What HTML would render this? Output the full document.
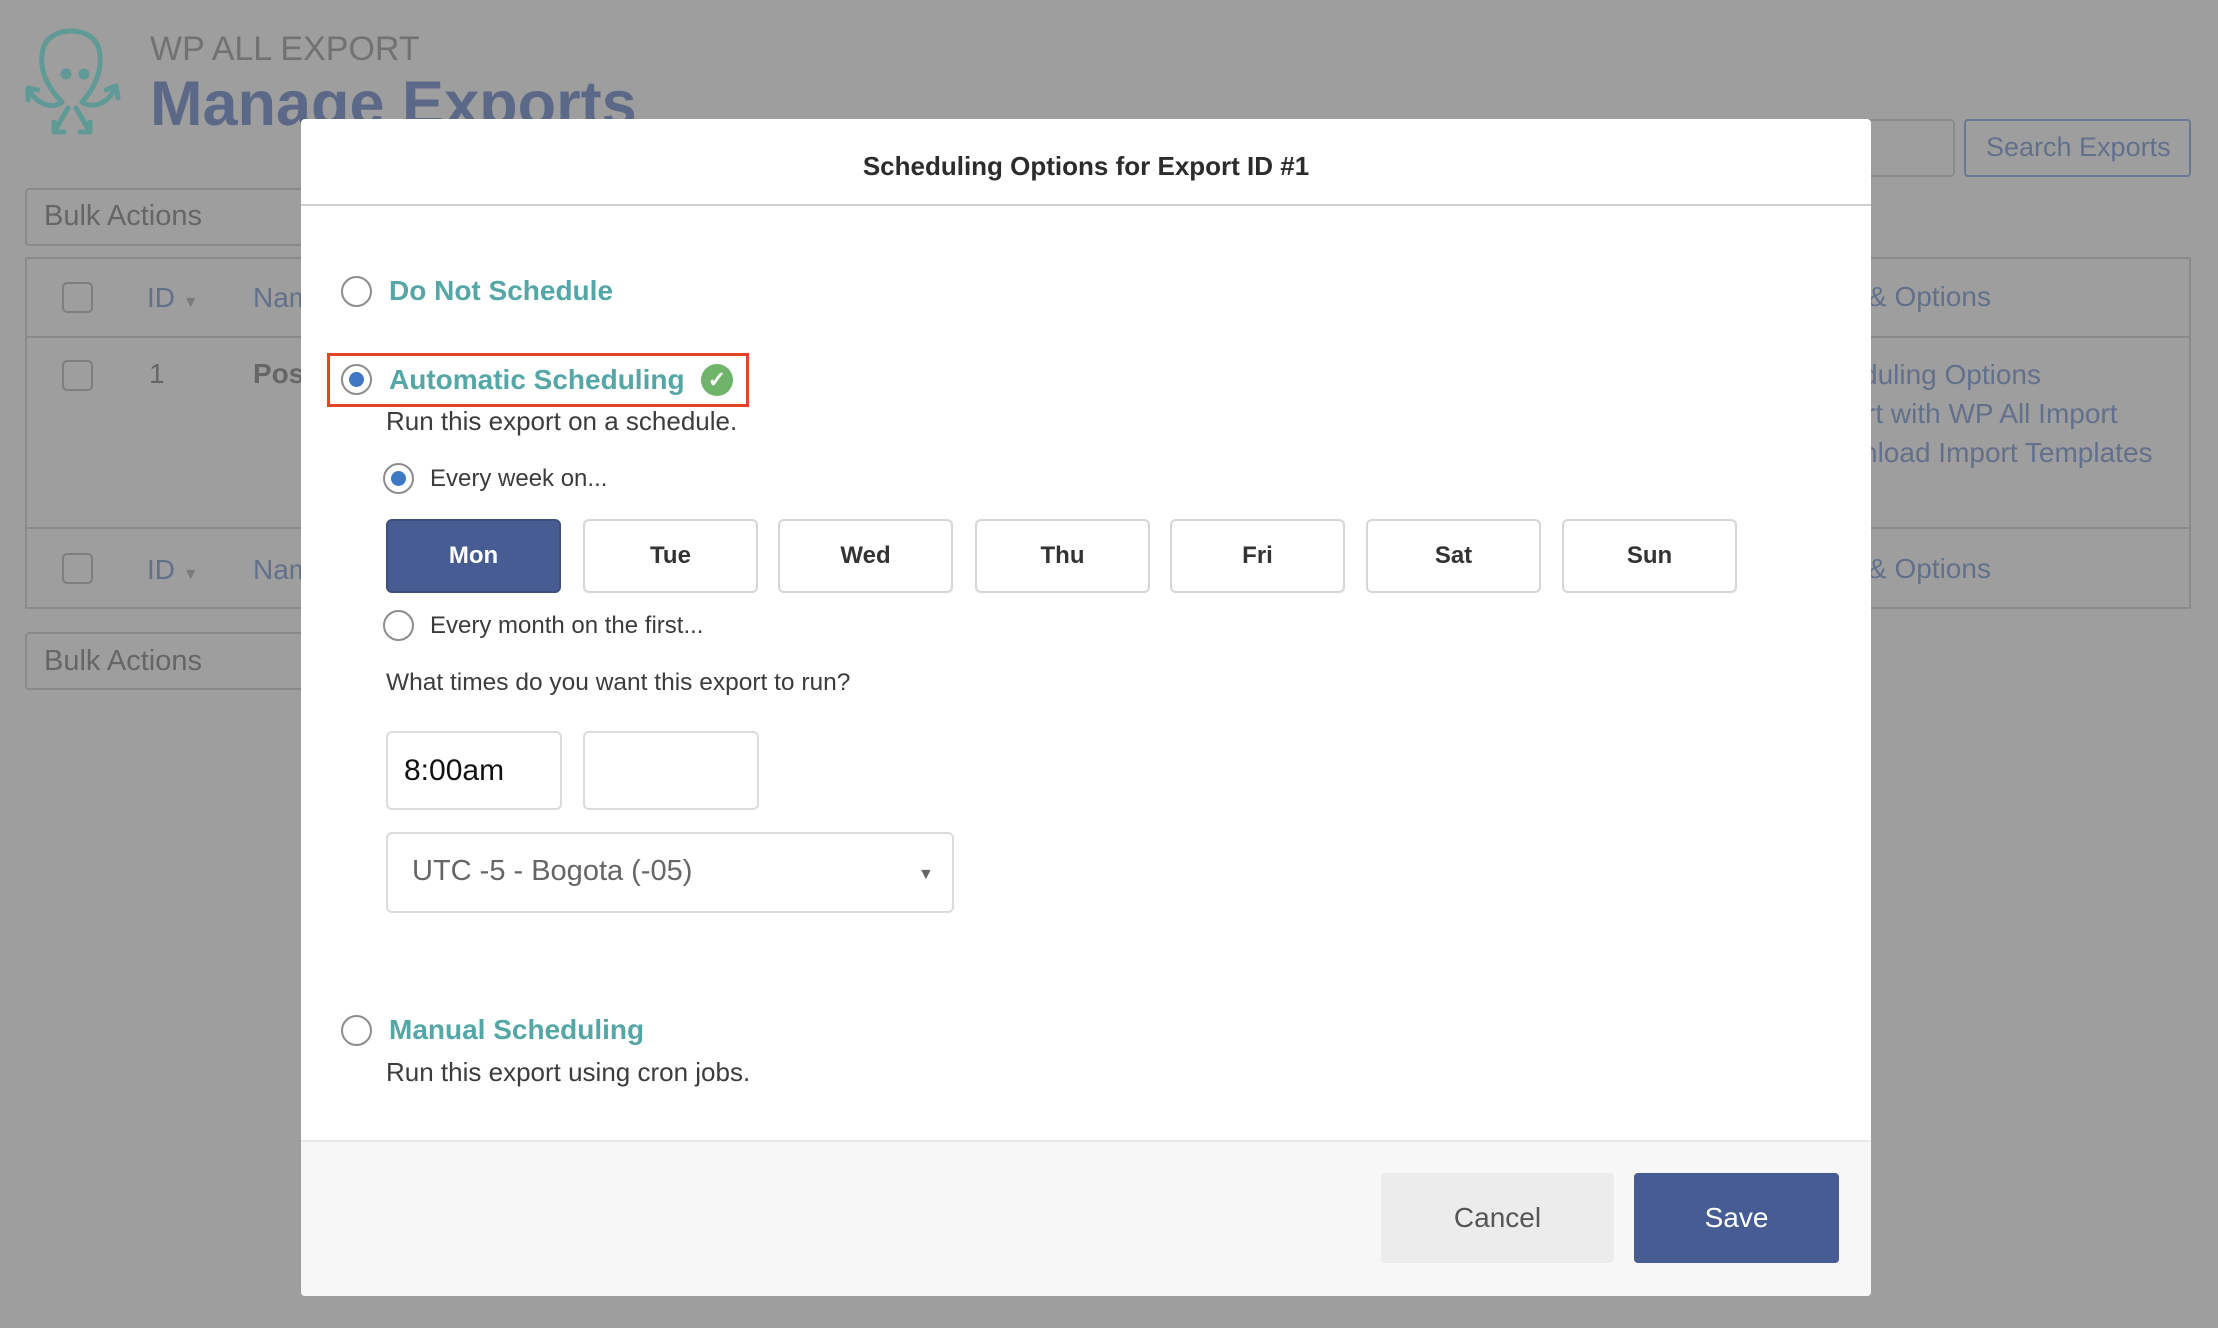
<!DOCTYPE html>
<html><head><meta charset="utf-8"><style>
*{box-sizing:border-box;margin:0;padding:0}
body{width:2218px;height:1328px;background:#9e9e9e;font-family:"Liberation Sans",Arial,sans-serif;position:relative;overflow:hidden}
.a{position:absolute;white-space:nowrap}
.bgbox{position:absolute;border:2px solid #8a8a8a;border-radius:4px}
.bgt{color:#666;font-size:29px}
.lnk{color:#63708c;font-size:28px}
.cb{position:absolute;width:31px;height:31px;border:2px solid #7e7e7e;border-radius:5px}
.modal{position:absolute;left:301px;top:119px;width:1570px;height:1177px;background:#fff;border-radius:4px}
.radio{position:absolute;width:31px;height:31px;border:2px solid #8d8d8d;border-radius:50%;background:#fff}
.radio.on::after{content:"";position:absolute;left:6px;top:6px;width:15px;height:15px;border-radius:50%;background:#3e78c4}
.lab{position:absolute;color:#55a6a6;font-size:28px;font-weight:bold;white-space:nowrap}
.txt{position:absolute;color:#3c3c3c;white-space:nowrap}
.day{position:absolute;top:400px;width:175px;height:74px;border:2px solid #d6d6d6;border-radius:6px;font-size:24px;font-weight:bold;color:#333;text-align:center;line-height:70px}
.inp{position:absolute;border:2px solid #dcdcdc;border-radius:6px}
</style></head><body>
<svg class="a" style="left:24px;top:24px" width="110" height="112" viewBox="0 0 110 112" fill="none" stroke="#5f9a96" stroke-width="5" stroke-linecap="round" stroke-linejoin="round">
<path d="M38 78 C20 60 14 40 20 22 C28 2 66 2 74 22 C80 40 74 60 58 78"/>
<circle cx="42" cy="50" r="3" fill="#5f9a96"/><circle cx="60" cy="50" r="3" fill="#5f9a96"/>
<path d="M38 78 C28 86 12 80 4 64 M4 64 L4 76 M4 64 L14 66"/>
<path d="M58 78 C70 86 86 78 92 62 M92 62 L82 66 M92 62 L94 74"/>
<path d="M44 84 L30 108 M30 108 L40 108 M30 108 L30 98"/>
<path d="M52 84 L66 108 M66 108 L56 108 M66 108 L66 98"/>
</svg>
<div class="a" style="left:150px;top:30px;font-size:34px;color:#727272">WP ALL EXPORT</div>
<div class="a" style="left:150px;top:68px;font-size:63px;font-weight:bold;color:#5c6887">Manage Exports</div>
<div class="bgbox" style="left:25px;top:188px;width:300px;height:58px"></div>
<div class="a bgt" style="left:44px;top:200px">Bulk Actions</div>
<div class="bgbox" style="left:25px;top:632px;width:300px;height:58px"></div>
<div class="a bgt" style="left:44px;top:645px">Bulk Actions</div>
<div class="bgbox" style="left:1800px;top:119px;width:155px;height:58px"></div>
<div class="bgbox" style="left:1964px;top:119px;width:227px;height:58px;border-color:#6a7893"></div>
<div class="a lnk" style="left:1986px;top:132px;font-size:27px">Search Exports</div>
<div class="bgbox" style="left:25px;top:257px;width:2166px;height:352px;border-radius:0"></div>
<div class="a" style="left:25px;top:336px;width:2166px;height:2px;background:#8a8a8a"></div>
<div class="a" style="left:25px;top:527px;width:2166px;height:2px;background:#8a8a8a"></div>
<div class="cb" style="left:62px;top:282px"></div>
<div class="cb" style="left:62px;top:360px"></div>
<div class="cb" style="left:62px;top:553px"></div>
<div class="a lnk" style="left:147px;top:282px">ID <span style="font-size:16px;color:#7b7b7b">▼</span></div>
<div class="a lnk" style="left:253px;top:282px">Nam</div>
<div class="a" style="left:149px;top:358px;font-size:28px;color:#666">1</div>
<div class="a" style="left:253px;top:358px;font-size:28px;color:#666;font-weight:bold">Pos</div>
<div class="a lnk" style="left:147px;top:554px">ID <span style="font-size:16px;color:#7b7b7b">▼</span></div>
<div class="a lnk" style="left:253px;top:554px">Nam</div>
<div class="a lnk" style="left:1868px;top:281px">&amp; Options</div>
<div class="a lnk" style="left:1862px;top:359px">duling Options</div>
<div class="a lnk" style="left:1866px;top:398px">rt with WP All Import</div>
<div class="a lnk" style="left:1862px;top:437px">nload Import Templates</div>
<div class="a lnk" style="left:1868px;top:553px">&amp; Options</div>

<div class="modal">
  <div class="a" style="left:0;top:0;width:1570px;height:87px;border-bottom:2px solid #d0d0d0;text-align:center;line-height:94px;font-size:26px;font-weight:bold;color:#2c2c2c">Scheduling Options for Export ID #1</div>

  <div class="radio" style="left:40px;top:157px"></div>
  <div class="lab" style="left:88px;top:156px">Do Not Schedule</div>

  <div class="a" style="left:26px;top:234px;width:422px;height:54px;border:3px solid #e0452c"></div>
  <div class="radio on" style="left:40px;top:245px"></div>
  <div class="lab" style="left:88px;top:245px">Automatic Scheduling</div>
  <div class="a" style="left:400px;top:245px;width:32px;height:32px;border-radius:50%;background:#6fb46a;color:#fff;font-size:22px;font-weight:bold;text-align:center;line-height:32px">✓</div>
  <div class="txt" style="left:85px;top:287px;font-size:26px">Run this export on a schedule.</div>

  <div class="radio on" style="left:82px;top:344px"></div>
  <div class="txt" style="left:129px;top:346px;font-size:24px">Every week on...</div>

  <div class="day" style="left:85px;background:#475c93;border-color:#3e5080;color:#fff">Mon</div>
  <div class="day" style="left:282px">Tue</div>
  <div class="day" style="left:477px">Wed</div>
  <div class="day" style="left:674px">Thu</div>
  <div class="day" style="left:869px">Fri</div>
  <div class="day" style="left:1065px">Sat</div>
  <div class="day" style="left:1261px">Sun</div>

  <div class="radio" style="left:82px;top:491px"></div>
  <div class="txt" style="left:129px;top:493px;font-size:24px">Every month on the first...</div>

  <div class="txt" style="left:85px;top:550px;font-size:24.5px">What times do you want this export to run?</div>

  <div class="inp" style="left:85px;top:612px;width:176px;height:79px"></div>
  <div class="txt" style="left:103px;top:635px;font-size:30px;color:#111">8:00am</div>
  <div class="inp" style="left:282px;top:612px;width:176px;height:79px"></div>

  <div class="inp" style="left:85px;top:713px;width:568px;height:81px"></div>
  <div class="txt" style="left:111px;top:736px;font-size:29px;color:#666">UTC -5 - Bogota (-05)</div>
  <div class="txt" style="left:617px;top:747px;font-size:16px;color:#666">▼</div>

  <div class="radio" style="left:40px;top:896px"></div>
  <div class="lab" style="left:88px;top:895px">Manual Scheduling</div>
  <div class="txt" style="left:85px;top:938px;font-size:26px">Run this export using cron jobs.</div>

  <div class="a" style="left:0;top:1021px;width:1570px;height:156px;background:#f7f7f7;border-top:2px solid #e8e8e8;border-radius:0 0 4px 4px"></div>
  <div class="a" style="left:1080px;top:1054px;width:233px;height:90px;background:#ececec;border-radius:4px;text-align:center;line-height:90px;font-size:28px;color:#555">Cancel</div>
  <div class="a" style="left:1333px;top:1054px;width:205px;height:90px;background:#475c93;border-radius:4px;text-align:center;line-height:90px;font-size:28px;color:#fff">Save</div>
</div>
</body></html>
